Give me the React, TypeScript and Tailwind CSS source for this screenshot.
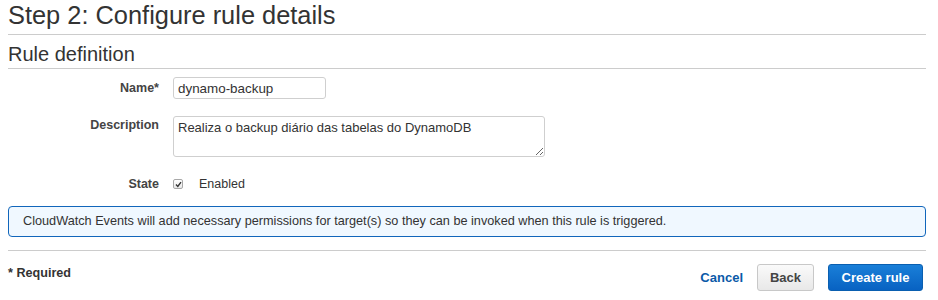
export default function App() {
  return (
    <div className="w-[938px] h-[300px] bg-white pl-2 pr-3 text-[#333] font-['Liberation_Sans',Arial,sans-serif]">
      {/* Header */}
      <h1 className="h-[35px] border-b border-[#cccccc] pt-[1px] text-[25.4px] leading-[28px] text-[#333]">
        Step 2: Configure rule details
      </h1>
      <h2 className="h-[34px] border-b border-[#cccccc] pt-[8px] text-[20px] leading-[22px] text-[#333]">
        Rule definition
      </h2>

      {/* Form */}
      <div className="mt-2 grid grid-cols-[151px_1fr] gap-x-[14px] text-[12.5px]">
        <label className="pt-[3px] text-right font-bold leading-[16px] text-[#444]">Name*</label>
        <input
          readOnly
          value="dynamo-backup"
          className="h-[22px] w-[153px] rounded-[3px] border border-[#cfcfcf] px-[4px] text-[13.4px] text-[#333] outline-none"
        />

        <label className="mt-[17px] pt-[1px] text-right font-bold leading-[16px] text-[#444]">Description</label>
        <textarea
          readOnly
          value="Realiza o backup diário das tabelas do DynamoDB"
          className="mt-[17px] h-[41px] w-[372px] rounded-[3px] border border-[#cfcfcf] px-[4px] py-[3px] text-[13px] leading-[16px] text-[#333] outline-none"
        />

        <label className="mt-[19px] text-right font-bold leading-[16px] text-[#444]">State</label>
        <div className="mt-[19px] flex h-[16px] items-center gap-4">
          <span className="grid h-[10px] w-[10px] place-items-center rounded-[2px] border border-[#a8a8a8] bg-gradient-to-b from-white to-[#e8e8e8]">
            <svg width="7" height="7" viewBox="0 0 7 7">
              <path d="M1 3.6 L2.8 5.4 L6 1.2" fill="none" stroke="#333" strokeWidth="1.4" />
            </svg>
          </span>
          <span className="text-[12.5px] text-[#333]">Enabled</span>
        </div>
      </div>

      {/* Info */}
      <div className="mt-[14px] flex h-[31px] items-center rounded-[4px] border border-[#1166bb] bg-[#f0f8ff] px-[14px] text-[12.7px] text-[#333]">
        CloudWatch Events will add necessary permissions for target(s) so they can be invoked when this rule is triggered.
      </div>

      {/* Footer */}
      <div className="mt-[13px] flex items-start justify-between border-t border-[#cccccc] pr-[3px] pt-[13px]">
        <span className="text-[12.6px] font-bold text-[#333]">* Required</span>
        <div className="flex items-center">
          <span className="mr-[14px] text-[13px] font-bold text-[#0a5aa8]">Cancel</span>
          <button className="mr-[14px] h-[27px] w-[57px] rounded-[3px] border border-[#c8c8c8] bg-gradient-to-b from-[#fafafa] to-[#e8e8e8] text-[13px] font-bold text-[#444]">
            Back
          </button>
          <button className="h-[27px] w-[95px] rounded-[3px] border border-[#0a5fb0] bg-gradient-to-b from-[#1a7fd8] to-[#0862c2] text-[13px] font-bold text-white">
            Create rule
          </button>
        </div>
      </div>
    </div>
  );
}
